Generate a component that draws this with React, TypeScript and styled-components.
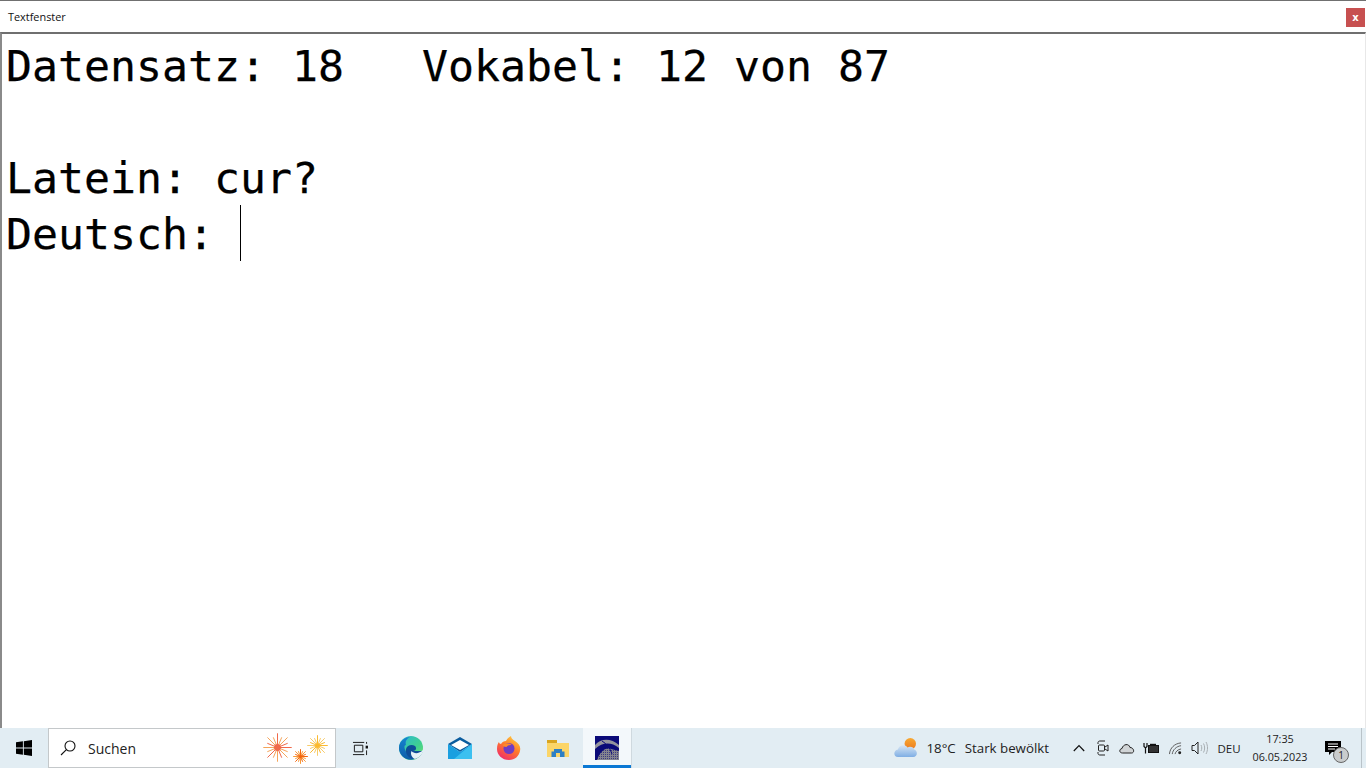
import React from "react";
import styled, { createGlobalStyle } from "styled-components";

const GlobalStyle = createGlobalStyle`
	html, body {
		margin: 0;
		padding: 0;
		height: 100%;
		overflow: hidden;
		background: #fff;
	}
	#root {
		height: 100%;
	}
`;

const Screen = styled.div`
	display: flex;
	flex-direction: column;
	width: 1366px;
	height: 768px;
	font-family: "Open Sans", "Noto Sans", sans-serif;
`;

const Window = styled.div`
	flex: 1;
	display: flex;
	flex-direction: column;
	min-height: 0;
	background: #fff;
	border-top: 1px solid #707070;
`;

const TitleBar = styled.div`
	height: 31px;
	flex: none;
	display: flex;
	align-items: center;
	justify-content: space-between;
	padding: 0 1px 0 8px;
	font-size: 10.9px;
	color: #111;
	box-sizing: border-box;
`;

const CloseButton = styled.div`
	width: 19px;
	height: 19px;
	margin-top: 2px;
	display: flex;
	align-items: center;
	justify-content: center;
	background: #c75050;
	color: #fff;
	font: bold 10px "DejaVu Sans", sans-serif;
`;

const TextArea = styled.div`
	flex: 1;
	border-top: 2px solid #6f6f6f;
	border-left: 2px solid #8a8a8a;
	border-right: 1px solid #e8e8e8;
	padding: 3px 0 0 4px;
	font-family: "DejaVu Sans Mono", "Liberation Mono", monospace;
	font-size: 43.2px;
	color: #000;
	-webkit-text-stroke: 0.25px #000;
`;

const Line = styled.div`
	height: 56px;
	line-height: 58px;
	white-space: pre;
	display: flex;
`;

const Caret = styled.span`
	display: block;
	width: 1px;
	height: 56px;
	background: #000;
`;

const Taskbar = styled.div`
	height: 40px;
	flex: none;
	display: flex;
	align-items: stretch;
	background: #e2edf3;
	color: #1a1a1a;
	font-size: 12px;
`;

const StartButton = styled.div`
	width: 48px;
	display: flex;
	align-items: center;
	justify-content: center;
`;

const SearchBox = styled.div`
	width: 288px;
	box-sizing: border-box;
	background: #fff;
	border: 1px solid #c4c8ca;
	display: flex;
	align-items: center;
	padding: 0 6px 0 11px;
	font-size: 14px;
	color: #222;
`;

const SearchLabel = styled.span`
	margin-left: 12px;
	flex: 1;
`;

const Apps = styled.div`
	display: flex;
	gap: 1px;
`;

const AppButton = styled.div<{ $active?: boolean }>`
	width: 48px;
	display: flex;
	align-items: center;
	justify-content: center;
	box-sizing: border-box;
	background: ${(p) => (p.$active ? "#f3f8fb" : "transparent")};
	border-bottom: 3px solid ${(p) => (p.$active ? "#0a78d4" : "transparent")};
	padding-top: 3px;
`;

const TaskViewButton = styled(AppButton)`
	width: 50px;
	padding-right: 2px;
`;

const Divider = styled.div`
	width: 1px;
	margin-left: -1px;
	background: #cfd9df;
`;

const Spacer = styled.div`
	flex: 1;
`;

const Weather = styled.div`
	display: flex;
	align-items: center;
	font-size: 13.3px;
	color: #222;
	margin-right: 18px;
`;

const WeatherTemp = styled.span`
	margin: 0 9px 0 8px;
`;

const Tray = styled.div`
	display: flex;
	align-items: center;
`;

const TraySlot = styled.div`
	width: 24px;
	display: flex;
	align-items: center;
	justify-content: center;
`;

const Lang = styled.div`
	width: 28px;
	margin-left: 4px;
	align-self: center;
	text-align: center;
	font-size: 11.5px;
	color: #222;
`;

const Clock = styled.div`
	width: 74px;
	display: flex;
	flex-direction: column;
	align-items: center;
	justify-content: center;
	font-size: 10.8px;
	line-height: 18px;
	color: #222;
`;

const Notify = styled.div`
	position: relative;
	width: 44px;
	box-sizing: border-box;
	padding-right: 12px;
	display: flex;
	align-items: center;
	justify-content: center;
`;

const Badge = styled.div`
	position: absolute;
	left: 16px;
	top: 19px;
	width: 16px;
	height: 16px;
	border-radius: 50%;
	background: #c9cccd;
	border: 1px solid #666;
	box-sizing: border-box;
	font-size: 10px;
	line-height: 14px;
	text-align: center;
	color: #222;
`;

const ShowDesktop = styled.div`
	width: 5px;
	border-left: 1px solid #b9c3c9;
	box-sizing: border-box;
`;

const Burst = ({ size, color, core }: { size: number; color: string; core: string }) => {
	const c = size / 2;
	const rays = Array.from({ length: 16 }, (_, i) => (i * Math.PI) / 8);
	return (
		<svg width={size} height={size} viewBox={`0 0 ${size} ${size}`}>
			{rays.map((a, i) => (
				<line
					key={i}
					x1={c + Math.cos(a) * size * 0.1}
					y1={c + Math.sin(a) * size * 0.1}
					x2={c + Math.cos(a) * (i % 2 ? size * 0.38 : size * 0.49)}
					y2={c + Math.sin(a) * (i % 2 ? size * 0.38 : size * 0.49)}
					stroke={i % 3 === 0 ? core : color}
					strokeWidth={1}
				/>
			))}
			<circle cx={c} cy={c} r={size * 0.12} fill={core} />
		</svg>
	);
};

const Fireworks = styled.div`
	position: relative;
	width: 66px;
	height: 34px;
	flex: none;
`;

const Spark = styled.div<{ $x: number; $y: number }>`
	position: absolute;
	left: ${(p) => p.$x}px;
	top: ${(p) => p.$y}px;
	line-height: 0;
`;

const WinLogo = () => (
	<svg width="16" height="16" viewBox="0 0 16 16">
		<path d="M0 2.3 6.9 1.3V7.6H0ZM7.8 1.2 16 0V7.6H7.8ZM0 8.5H6.9V14.8L0 13.8ZM7.8 8.5H16V16L7.8 14.8Z" fill="#000" />
	</svg>
);

const SearchIcon = () => (
	<svg width="16" height="16" viewBox="0 0 16 16" fill="none" stroke="#111" strokeWidth="1.1">
		<circle cx="10" cy="6" r="5" />
		<path d="M6.4 9.6 1 15" />
	</svg>
);

const TaskView = () => (
	<svg width="16" height="15" viewBox="0 0 17 16" fill="none" stroke="#111" strokeWidth="1">
		<path d="M1 1.5H13M1 14.5H13M2.5 4.5H11.5V11.5H2.5Z" />
		<rect x="14.5" y="5" width="2.5" height="3" fill="#111" stroke="none" />
		<path d="M15.5 1V3M15.5 10V15" />
	</svg>
);

const Edge = () => (
	<svg width="24" height="24" viewBox="0 0 24 24">
		<defs>
			<linearGradient id="edgeA" x1="0" y1="0" x2="1" y2="1">
				<stop offset="0" stopColor="#2bb6d8" />
				<stop offset="0.6" stopColor="#3fd18f" />
				<stop offset="1" stopColor="#7be06a" />
			</linearGradient>
			<linearGradient id="edgeB" x1="0" y1="0" x2="0" y2="1">
				<stop offset="0" stopColor="#1682d0" />
				<stop offset="1" stopColor="#0c5ea8" />
			</linearGradient>
		</defs>
		<circle cx="12" cy="12" r="12" fill="url(#edgeA)" />
		<path d="M0 12C0 5 6 1 11 1 7 3 6 6 7 9 3 9 7 20 16 23 8 26 0 20 0 12Z" fill="url(#edgeB)" />
		<path d="M7 13C8 9 13 8 16 10 18 12 17 15 14 15H24C22 20 19 22 16 23 10 23 6 18 7 13Z" fill="#0d4f97" />
		<path d="M12.5 15C15 18 20 18 24 14V16C22 20 19 22 16 23 13 22 11 18 12.5 15Z" fill="#e4f2f6" />
	</svg>
);

const Mail = () => (
	<svg width="24" height="23" viewBox="0 0 24 23">
		<path d="M0 7 12 0 24 7 12 15Z" fill="#0a5c9e" />
		<path d="M3 8 12 3 21 8 12 13Z" fill="#fff" />
		<path d="M0 7 12 15 24 7V22H0Z" fill="#1a9fe0" />
		<path d="M24 7V22H6Z" fill="#3cc0f0" />
	</svg>
);

const Firefox = () => (
	<svg width="24" height="24" viewBox="0 0 24 24">
		<defs>
			<linearGradient id="ffA" x1="0.8" y1="0" x2="0.2" y2="1">
				<stop offset="0" stopColor="#ffd23e" />
				<stop offset="0.45" stopColor="#ff7a2b" />
				<stop offset="1" stopColor="#f0266e" />
			</linearGradient>
		</defs>
		<path d="M12 24C5 24 0 19 0 13 0 9 1 7 2 6 2 7 3 8 4 8 5 6 7 5 9 5 10 3 12 1 14 0 14 2 15 3 18 5 22 8 24 10 23 15 22 20 18 24 12 24Z" fill="url(#ffA)" />
		<circle cx="12" cy="12.5" r="5.5" fill="#6f3cc4" />
		<path d="M6 9C9 7 13 7 14.5 9 12 8.5 10 10 9.5 11 7 11 6 10 6 9Z" fill="#ff8a2a" />
	</svg>
);

const Folder = () => (
	<svg width="22" height="17" viewBox="0 0 22 17">
		<rect x="0" y="0" width="10" height="3" fill="#d9a520" />
		<rect x="0" y="3" width="22" height="14" fill="#fbd568" />
		<path d="M4.5 17V11.5H7V9H15V11.5H17.5V17H13V13H9V17Z" fill="#2d7fc4" />
	</svg>
);

const AppIcon = () => (
	<svg width="24" height="24" viewBox="0 0 24 24">
		<defs>
			<pattern id="dither" width="2" height="2" patternUnits="userSpaceOnUse">
				<rect width="2" height="2" fill="#84848f" />
				<rect width="1" height="1" fill="#3c3c80" />
			</pattern>
		</defs>
		<rect width="24" height="24" fill="#0a0a78" />
		<path d="M0 9C6 2 16 2 24 9V12C16 6 8 6 0 13Z" fill="#94949e" />
		<path d="M2 24C5 16 10 11 16 13L24 15V24Z" fill="url(#dither)" />
		<path d="M7 5C12 8 15 12 17 18" stroke="#0a0a78" strokeWidth="1" fill="none" />
	</svg>
);

const Cloud = () => (
	<svg width="24" height="20" viewBox="0 0 25 21">
		<defs>
			<linearGradient id="sun" x1="0" y1="0" x2="0" y2="1">
				<stop offset="0" stopColor="#f8a932" />
				<stop offset="1" stopColor="#ec7b20" />
			</linearGradient>
			<linearGradient id="cl" x1="0" y1="0" x2="0" y2="1">
				<stop offset="0" stopColor="#d8e6f4" />
				<stop offset="1" stopColor="#7eaee4" />
			</linearGradient>
		</defs>
		<circle cx="17" cy="6" r="6" fill="url(#sun)" />
		<path d="M4 20C-1 20-1 13 4 12 5 7 12 6 14 10 17 8 21 10 21 12 25 13 25 20 20 20Z" fill="url(#cl)" />
	</svg>
);

const Chevron = () => (
	<svg width="12" height="8" viewBox="0 0 12 8" fill="none" stroke="#111" strokeWidth="1.2">
		<path d="M.8 7 6 1.5 11.2 7" />
	</svg>
);

const Meet = () => (
	<svg width="12" height="16" viewBox="0 0 12 16" fill="none" stroke="#222" strokeWidth="1">
		<path d="M1 4V2.5C1 1.5 2 1 3 1H8M1 12V13.5C1 14.5 2 15 3 15H8" />
		<rect x="1.5" y="5" width="6" height="6" rx="1" />
		<path d="M8 7 11 5V11L8 9" />
	</svg>
);

const TrayCloud = () => (
	<svg width="16" height="11" viewBox="0 0 16 11" fill="#d0d4d6" stroke="#222" strokeWidth="1">
		<path d="M3.5 10C0 10 0 6 3 5.5 4 1 10 0 11 4.5 15 4.5 16 10 12.5 10Z" />
	</svg>
);

const Battery = () => (
	<svg width="16" height="11" viewBox="0 0 16 11">
		<rect x="5.5" y="2.5" width="10" height="7" stroke="#111" fill="#333" />
		<path d="M1 0V3.5L2.5 5 4 3.5V0M2.5 5V10.5" stroke="#111" fill="none" strokeWidth="1.2" />
		<rect x="7" y="0.8" width="6" height="1.2" fill="#111" />
	</svg>
);

const Wifi = () => (
	<svg width="13" height="13" viewBox="0 0 14 14" fill="none" stroke="#555" strokeWidth="1">
		<path d="M.5 13C1 6.5 6 1.5 13 1M3.5 13C4 8.5 8 4.5 13 4M6.5 13C7 10.5 9.5 8 13 7.5" />
		<circle cx="11.5" cy="11.5" r="1.6" fill="#222" stroke="none" />
	</svg>
);

const Speaker = () => (
	<svg width="17" height="14" viewBox="0 0 17 14" fill="none" stroke="#222" strokeWidth="1">
		<path d="M1 4.5H3.5L7 1V13L3.5 9.5H1Z" />
		<path d="M10 4C11 6 11 8 10 10M12.5 2.5C14 5 14 9 12.5 11.5M15 1C17 4.5 17 9.5 15 13" stroke="#a7adb1" />
	</svg>
);

const ActionCenter = () => (
	<svg width="16" height="14" viewBox="0 0 16 14">
		<path d="M0 0H16V11H7L4 14V11H0Z" fill="#000" />
		<path d="M3 3H13M3 5.5H13M3 8H10" stroke="#fff" strokeWidth="1" />
	</svg>
);

const App = () => {
	return (
		<Screen>
			<GlobalStyle />
			<Window>
				<TitleBar>
					<span>Textfenster</span>
					<CloseButton>x</CloseButton>
				</TitleBar>
				<TextArea>
					<Line>Datensatz: 18   Vokabel: 12 von 87</Line>
					<Line />
					<Line>Latein: cur?</Line>
					<Line>
						Deutsch: <Caret />
					</Line>
				</TextArea>
			</Window>
			<Taskbar>
				<StartButton>
					<WinLogo />
				</StartButton>
				<SearchBox>
					<SearchIcon />
					<SearchLabel>Suchen</SearchLabel>
					<Fireworks>
						<Spark $x={0} $y={2}>
							<Burst size={29} color="#f5a45a" core="#f0694a" />
						</Spark>
						<Spark $x={30} $y={18}>
							<Burst size={15} color="#f79a3a" core="#f4650f" />
						</Spark>
						<Spark $x={44} $y={4}>
							<Burst size={21} color="#f8cc6a" core="#fbb92e" />
						</Spark>
					</Fireworks>
				</SearchBox>
				<Apps>
					<TaskViewButton>
						<TaskView />
					</TaskViewButton>
					<AppButton>
						<Edge />
					</AppButton>
					<AppButton>
						<Mail />
					</AppButton>
					<AppButton>
						<Firefox />
					</AppButton>
					<AppButton>
						<Folder />
					</AppButton>
					<AppButton $active>
						<AppIcon />
					</AppButton>
					<Divider />
				</Apps>
				<Spacer />
				<Weather>
					<Cloud />
					<WeatherTemp>18°C</WeatherTemp>
					<span>Stark bewölkt</span>
				</Weather>
				<Tray>
					<TraySlot>
						<Chevron />
					</TraySlot>
					<TraySlot>
						<Meet />
					</TraySlot>
					<TraySlot>
						<TrayCloud />
					</TraySlot>
					<TraySlot>
						<Battery />
					</TraySlot>
					<TraySlot>
						<Wifi />
					</TraySlot>
					<TraySlot>
						<Speaker />
					</TraySlot>
				</Tray>
				<Lang>DEU</Lang>
				<Clock>
					<span>17:35</span>
					<span>06.05.2023</span>
				</Clock>
				<Notify>
					<ActionCenter />
					<Badge>1</Badge>
				</Notify>
				<ShowDesktop />
			</Taskbar>
		</Screen>
	);
};

export default App;
